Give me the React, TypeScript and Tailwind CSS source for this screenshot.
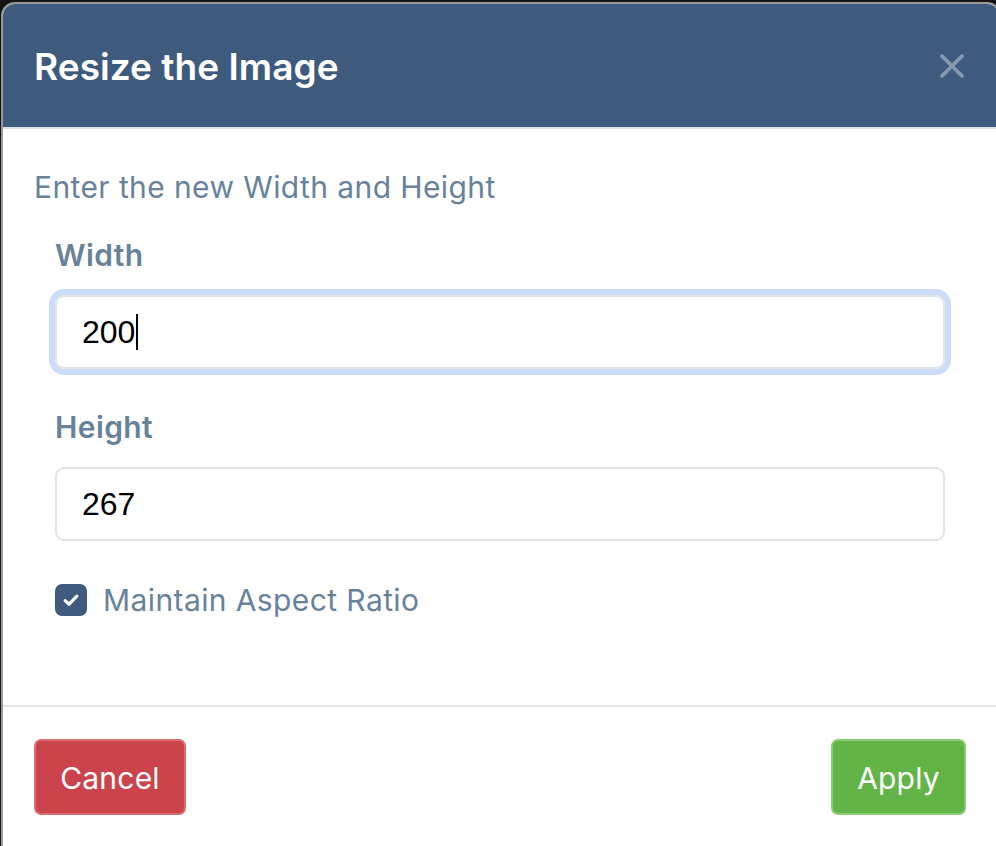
import React from "react";

export default function App() {
  return (
    <div className="w-[996px] h-[846px] overflow-hidden bg-[#141414] pt-[2px] pl-[1px]" style={{ fontFamily: "Inter, 'Noto Sans', sans-serif" }}>
      <div className="w-[1000px] h-[900px] rounded-[14px] border-2 border-[#9a9a9a] bg-white overflow-hidden flex flex-col">
        {/* Header */}
        <div className="h-[125px] bg-[#3e5b7d] border-b-2 border-[#dfe3e8] flex items-center justify-between pl-[31px] pr-[34px] shrink-0">
          <h1 className="text-[37px] font-semibold text-white leading-none tracking-[0.05px] mt-[2px]">Resize the Image</h1>
          <svg width="24" height="24" viewBox="0 0 24 24" className="mr-[1px] mt-[1px]">
            <path d="M2 2 L22 22 M22 2 L2 22" stroke="#8799ae" strokeWidth="3.6" strokeLinecap="round" />
          </svg>
        </div>
        {/* Body */}
        <div className="pl-[31px] pr-[35px] pt-[37px] pb-[84px] border-b-2 border-[#dfe3e8] shrink-0">
          <p className="text-[30px] leading-[42px] text-[#68829a] tracking-[0.4px]">Enter the new Width and Height</p>
          <div className="pl-[21px] pr-[19px]">
            <label className="block mt-[26px] text-[30px] leading-[42px] font-semibold text-[#68829a] tracking-[0.4px]">Width</label>
            <div className="mt-[19px] h-[74px] rounded-[9px] border-2 border-[#dfe4ea] ring-[6px] ring-[#cbdcf8] flex items-center pl-[25px]" style={{ fontFamily: "'Liberation Sans', Arial, sans-serif" }}>
              <span className="text-[32px] text-black leading-none">200</span>
              <span className="w-[2px] h-[36px] bg-black ml-[1px]" />
            </div>
            <label className="block mt-[37px] text-[30px] leading-[42px] font-semibold text-[#68829a] tracking-[0.4px]">Height</label>
            <div className="mt-[19px] h-[74px] rounded-[9px] border-2 border-[#dfe4ea] flex items-center pl-[25px]" style={{ fontFamily: "'Liberation Sans', Arial, sans-serif" }}>
              <span className="text-[32px] text-black leading-none">267</span>
            </div>
            <div className="mt-[38px] h-[42px] flex items-center">
              <span className="w-[32px] h-[32px] rounded-[7px] bg-[#3e5b7d] flex items-center justify-center">
                <svg width="18" height="18" viewBox="0 0 16 16">
                  <path d="M2.8 8.6 L6.3 11.8 L13.2 4.6" fill="none" stroke="white" strokeWidth="2.8" strokeLinecap="round" strokeLinejoin="round" />
                </svg>
              </span>
              <span className="ml-[16px] text-[30px] leading-[42px] text-[#68829a] tracking-[0.4px]">Maintain Aspect Ratio</span>
            </div>
          </div>
        </div>
        {/* Footer */}
        <div className="flex justify-between pl-[31px] pr-[33px] pt-[32px] w-[996px]">
          <button className="h-[76px] w-[152px] rounded-[7px] bg-[#cb444b] border-2 border-[#dc6d73] text-white text-[30px] tracking-[0.2px] pt-[2px]">Cancel</button>
          <button className="h-[76px] w-[135px] rounded-[7px] bg-[#62b446] border-2 border-[#8bcb75] text-white text-[30px] tracking-[0.2px] pt-[2px]">Apply</button>
        </div>
      </div>
    </div>
  );
}
